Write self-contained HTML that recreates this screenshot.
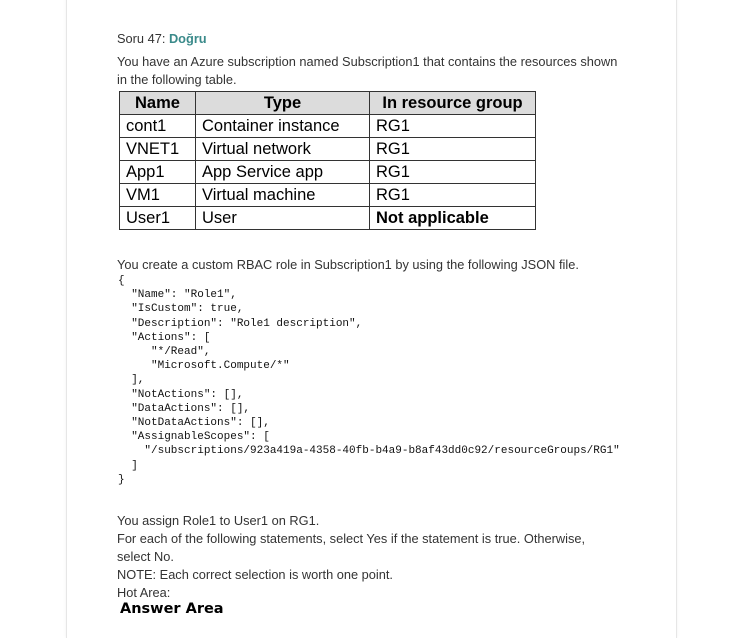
<!DOCTYPE html>
<html><head><meta charset="utf-8"><style>
body{margin:0;width:737px;height:618px;background:#fff;overflow:hidden;font-family:"Liberation Sans",sans-serif;color:#333;}
.card{position:absolute;left:66px;top:-2px;width:609px;height:640px;border-left:1px solid #e6e6e6;border-right:1px solid #e6e6e6;box-shadow:0 0 3px rgba(0,0,0,.06);}
.t{position:absolute;left:117px;font-size:12.8px;white-space:nowrap;}
table{position:absolute;left:119px;top:91px;border-collapse:collapse;table-layout:fixed;width:416px;font-family:"Liberation Sans",sans-serif;font-size:16.5px;color:#000;}
td,th{border:1px solid #333;height:22px;padding:0 6px;text-align:left;white-space:nowrap;line-height:20px;}
th{background:#dcdcdc;text-align:center;font-weight:bold;}
pre{position:absolute;left:118px;top:274px;margin:0;font-family:"Liberation Mono",monospace;font-size:11px;line-height:14.2px;color:#111;}
</style></head><body>
<div class="card"></div>
<div class="t" style="top:31px">Soru 47: <b style="color:#3a8a8a">Doğru</b></div>
<div class="t" style="top:54px">You have an Azure subscription named Subscription1 that contains the resources shown</div>
<div class="t" style="top:72px">in the following table.</div>
<table>
<colgroup><col style="width:76px"><col style="width:174px"><col style="width:166px"></colgroup>
<tr><th>Name</th><th>Type</th><th>In resource group</th></tr>
<tr><td>cont1</td><td>Container instance</td><td>RG1</td></tr>
<tr><td>VNET1</td><td>Virtual network</td><td>RG1</td></tr>
<tr><td>App1</td><td>App Service app</td><td>RG1</td></tr>
<tr><td>VM1</td><td>Virtual machine</td><td>RG1</td></tr>
<tr><td>User1</td><td>User</td><td><b>Not applicable</b></td></tr>
</table>
<div class="t" style="top:257px">You create a custom RBAC role in Subscription1 by using the following JSON file.</div>
<pre>{
  "Name": "Role1",
  "IsCustom": true,
  "Description": "Role1 description",
  "Actions": [
     "*/Read",
     "Microsoft.Compute/*"
  ],
  "NotActions": [],
  "DataActions": [],
  "NotDataActions": [],
  "AssignableScopes": [
    "/subscriptions/923a419a-4358-40fb-b4a9-b8af43dd0c92/resourceGroups/RG1"
  ]
}</pre>
<div class="t" style="top:513px">You assign Role1 to User1 on RG1.</div>
<div class="t" style="top:531px">For each of the following statements, select Yes if the statement is true. Otherwise,</div>
<div class="t" style="top:549px">select No.</div>
<div class="t" style="top:567px">NOTE: Each correct selection is worth one point.</div>
<div class="t" style="top:585px">Hot Area:</div>
<div class="t" style="top:601px;left:120px;font-family:'DejaVu Sans',sans-serif;font-weight:bold;font-size:14.5px;color:#000">Answer Area</div>
</body></html>
